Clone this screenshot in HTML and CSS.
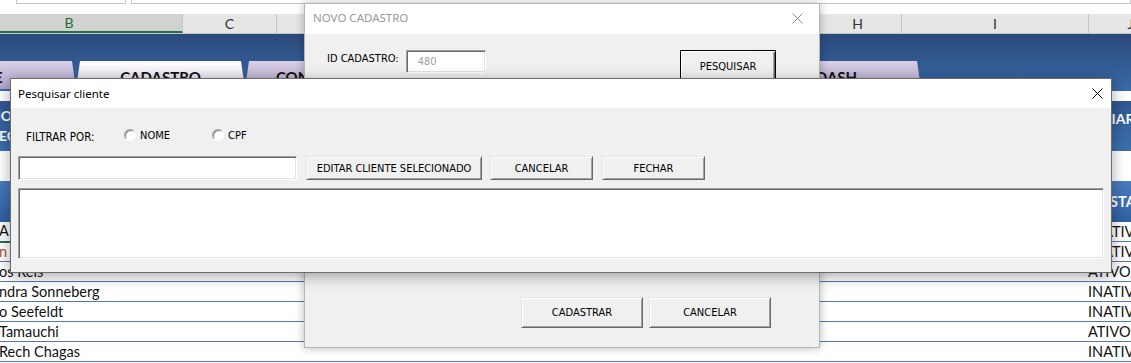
FILE: index.html
```html
<!DOCTYPE html>
<html lang="pt-BR">
<head>
  <meta charset="UTF-8">
  <title>Cadastro de clientes</title>
  <link rel="stylesheet" href="styles.css">
</head>
<body>
  <!-- Planilha ao fundo -->
  <div class="sheet">
    <div class="formula">
      <div class="namebox"></div>
      <div class="fxbox"></div>
    </div>

    <div class="colheads">
      <div class="col col-b selected">B</div>
      <div class="col col-c">C</div>
      <div class="col col-d">D</div>
      <div class="col col-e">E</div>
      <div class="col col-f">F</div>
      <div class="col col-g">G</div>
      <div class="col col-h">H</div>
      <div class="col col-i">I</div>
      <div class="col col-j">J</div>
    </div>

    <div class="banner">
      <div class="tabs">
        <div class="tab tab-first">HOME</div>
        <div class="tab active">CADASTRO</div>
        <div class="tab tab-con">CONSULTAR</div>
        <div class="tab">RELATÓRIO</div>
        <div class="tab">FINANCEIRO</div>
        <div class="tab">DASH</div>
      </div>
    </div>

    <div class="strip"></div>

    <div class="actions">
      <div class="act act-left">NOVO<br>RECADASTRO</div>
      <div class="act act-right">ENVIAR</div>
    </div>

    <div class="strip tall"></div>

    <div class="thead">
      <div class="cell-left"></div>
      <div class="cell-right">STATUS</div>
    </div>

    <div class="row first">
      <div class="cell-left">A</div>
      <div class="cell-right">INATIVO</div>
    </div>
    <div class="row">
      <div class="cell-left accent">n</div>
      <div class="cell-right">INATIVO</div>
    </div>
    <div class="row">
      <div class="cell-left">os Reis</div>
      <div class="cell-right">ATIVO</div>
    </div>
    <div class="row">
      <div class="cell-left">ndra Sonneberg</div>
      <div class="cell-right">INATIVO</div>
    </div>
    <div class="row">
      <div class="cell-left">o Seefeldt</div>
      <div class="cell-right">INATIVO</div>
    </div>
    <div class="row">
      <div class="cell-left">Tamauchi</div>
      <div class="cell-right">ATIVO</div>
    </div>
    <div class="row">
      <div class="cell-left">Rech Chagas</div>
      <div class="cell-right">INATIVO</div>
    </div>
  </div>

  <!-- Janela: Novo cadastro (inativa) -->
  <div class="win win-novo">
    <div class="titlebar">
      <span class="title muted">NOVO CADASTRO</span>
      <svg class="close" width="11" height="11" viewBox="0 0 11 11">
        <path d="M0.5 0.5L10.5 10.5M10.5 0.5L0.5 10.5" stroke="#8a8a8a" stroke-width="1"/>
      </svg>
    </div>
    <div class="novo-body">
      <div class="novo-row">
        <span class="lbl id-lbl">ID CADASTRO:</span>
        <div class="field id-field">480</div>
        <button class="btn btn-default pesquisar">PESQUISAR</button>
      </div>
      <div class="novo-footer">
        <button class="btn big">CADASTRAR</button>
        <button class="btn big">CANCELAR</button>
      </div>
    </div>
  </div>

  <!-- Janela: Pesquisar cliente (ativa) -->
  <div class="win win-pesq">
    <div class="titlebar">
      <span class="title">Pesquisar cliente</span>
      <svg class="close" width="11" height="11" viewBox="0 0 11 11">
        <path d="M0.5 0.5L10.5 10.5M10.5 0.5L0.5 10.5" stroke="#000" stroke-width="1"/>
      </svg>
    </div>
    <div class="pesq-body">
      <div class="filter">
        <span class="lbl filter-lbl">FILTRAR POR:</span>
        <label class="opt opt-nome"><span class="radio"></span>NOME</label>
        <label class="opt"><span class="radio"></span>CPF</label>
      </div>
      <div class="search">
        <div class="field search-field"></div>
        <button class="btn editar">EDITAR CLIENTE SELECIONADO</button>
        <button class="btn small">CANCELAR</button>
        <button class="btn small">FECHAR</button>
      </div>
      <div class="field list"></div>
    </div>
  </div>
</body>
</html>
```

FILE: styles.css
```css
html, body {
  margin: 0;
  padding: 0;
}

body {
  width: 1131px;
  height: 363px;
  overflow: hidden;
  position: relative;
  background: #fff;
  font-family: Lato, "Liberation Sans", sans-serif;
}

/* ---------- planilha ---------- */

.sheet {
  width: 1131px;
}

.formula {
  height: 14px;
  display: flex;
  gap: 5px;
  padding-left: 16px;
  box-sizing: border-box;
}

.namebox,
.fxbox {
  height: 3px;
  border: 1px solid #c6c6c6;
  border-top: none;
  background: #fff;
}

.namebox { width: 108px; }
.fxbox { flex: 1; }

.colheads {
  height: 19px;
  display: flex;
  background: #e6e6e6;
  border-bottom: 1px solid #c6c6c6;
}

.col {
  flex: none;
  display: flex;
  align-items: center;
  justify-content: center;
  font-size: 14px;
  color: #333;
  border-right: 1px solid #c6c6c6;
  box-sizing: border-box;
}

.col.selected {
  background: #d2d2d2;
  color: #1e6b41;
  border-bottom: 2px solid #217346;
}

.col-b { width: 183px; padding-right: 44px; }
.col-c { width: 94px; }
.col-d { width: 133px; }
.col-e { width: 135px; }
.col-f { width: 135px; }
.col-g { width: 134px; }
.col-h { width: 88px; }
.col-i { width: 187px; }
.col-j { width: 84px; }

.banner {
  height: 57px;
  box-sizing: border-box;
  padding-top: 27px;
  background: linear-gradient(to bottom, #2a4a79, #3a6aa9);
  overflow: hidden;
}

.tabs {
  display: flex;
  margin-left: -93px;
}

.tab {
  flex: none;
  width: 169px;
  height: 28px;
  box-sizing: border-box;
  padding-top: 7px;
  line-height: 18px;
  text-align: center;
  font-size: 15px;
  font-weight: bold;
  color: #111;
  background: linear-gradient(to bottom, #d9d0e6, #b3a4c9);
  clip-path: polygon(4px 0, calc(100% - 4px) 0, 100% 100%, 0 100%);
}

.tab.tab-first {
  padding-right: 24px;
}

.tab.tab-con {
  padding-right: 20px;
}

.tab.active {
  background: linear-gradient(to bottom, #ffffff, #ddd4ea);
}

.strip {
  height: 10px;
  background: #fff;
}

.strip.tall {
  height: 30px;
}

.actions {
  height: 50px;
  display: flex;
  justify-content: space-between;
}

.act {
  background: linear-gradient(to bottom, #2f5890, #3d6fae);
  color: #fff;
  font-weight: bold;
  font-size: 14px;
  line-height: 20px;
  box-sizing: border-box;
}

.act-left {
  width: 120px;
  margin-left: -10px;
  padding-top: 5px;
}

.act-right {
  width: 60px;
  padding-left: 12px;
  padding-top: 8px;
  white-space: nowrap;
}

.thead {
  height: 41px;
  display: flex;
  align-items: center;
  background: linear-gradient(to bottom, #4a7cc0, #30609f);
  color: #fff;
  font-weight: bold;
  font-size: 14.5px;
}

.thead .cell-right {
  padding-left: 24px;
}

.row {
  height: 20px;
  display: flex;
  align-items: center;
  box-sizing: border-box;
  border-bottom: 1px solid #5577b3;
  font-size: 14.5px;
  color: #111;
}

.row.first .cell-left {
  height: 20px;
  line-height: 19px;
  border-bottom: 2px solid #217346;
  margin-top: 1px;
}

.cell-left {
  width: 300px;
  margin-left: -1px;
  white-space: nowrap;
}

.cell-left.accent {
  color: #b0501c;
}

.cell-right {
  margin-left: auto;
  width: 45px;
  padding-left: 2px;
  white-space: nowrap;
  box-sizing: border-box;
}

/* ---------- janelas ---------- */

.win {
  position: absolute;
  box-sizing: border-box;
  background: #f0f0f0;
  display: flex;
  flex-direction: column;
  font-family: "DejaVu Sans Condensed", "DejaVu Sans", sans-serif;
  font-stretch: condensed;
  font-size: 11px;
  color: #000;
}

.win-novo {
  left: 304px;
  top: 3px;
  width: 516px;
  height: 345px;
  border: 1px solid #b5b5b5;
  box-shadow: 0 0 9px rgba(0, 0, 0, 0.28);
}

.win-pesq {
  left: 10px;
  top: 78px;
  width: 1102px;
  height: 195px;
  border: 1px solid #6c6c6c;
  box-shadow: 0 3px 14px rgba(0, 0, 0, 0.35);
}

.titlebar {
  flex: none;
  height: 30px;
  background: #fff;
  display: flex;
  align-items: center;
  justify-content: space-between;
  box-sizing: border-box;
}

.title {
  font-family: "Noto Sans", "Open Sans", sans-serif;
  font-stretch: normal;
  font-size: 11.5px;
  color: #000;
}

.title.muted {
  color: #999;
}

.win-novo .titlebar {
  padding: 0 16px 3px 8px;
}

.win-novo .close {
  margin-top: 2px;
}

.win-pesq .titlebar {
  height: 29px;
  padding: 0 8px 0 7px;
}

.close {
  display: block;
}

/* controles clássicos */

.field {
  background: #fff;
  box-sizing: border-box;
  border: 1px solid;
  border-color: #a0a0a0 #fff #fff #a0a0a0;
  box-shadow: inset 1px 1px 0 #696969, inset -1px -1px 0 #e3e3e3;
}

.btn {
  font: inherit;
  font-stretch: condensed;
  color: #000;
  background: #f0f0f0;
  box-sizing: border-box;
  border: 1px solid;
  border-color: #e3e3e3 #696969 #696969 #e3e3e3;
  box-shadow: inset 1px 1px 0 #fff, inset -1px -1px 0 #a0a0a0;
  padding: 0;
  margin: 0;
}

.btn-default {
  border-color: #000;
  box-shadow: inset 1px 1px 0 #fff, inset -1px -1px 0 #696969, inset -2px -2px 0 #a0a0a0;
}

.lbl {
  white-space: nowrap;
}

/* novo cadastro */

.novo-body {
  flex: 1;
  display: flex;
  flex-direction: column;
  padding: 16px 43px 19px 22px;
}

.novo-row {
  display: flex;
  align-items: flex-start;
}

.id-lbl {
  padding-top: 2px;
  margin-right: 7px;
}

.id-field {
  width: 80px;
  height: 23px;
  line-height: 21px;
  padding-left: 11px;
  color: #a0a0a0;
}

.pesquisar {
  margin-left: auto;
  width: 96px;
  height: 32px;
}

.novo-footer {
  margin-top: auto;
  display: flex;
  justify-content: flex-end;
  gap: 6px;
  padding-right: 5px;
}

.btn.big {
  width: 122px;
  height: 31px;
}

/* pesquisar cliente */

.pesq-body {
  flex: 1;
  padding: 0 7px;
}

.filter {
  margin-top: 20px;
  height: 14px;
  display: flex;
  align-items: center;
  padding-left: 8px;
}

.filter-lbl {
  padding-top: 3px;
  width: 98px;
  font-size: 11.5px;
}

.opt {
  display: flex;
  align-items: center;
  gap: 4px;
}

.opt-nome {
  width: 88px;
}

.radio {
  width: 12px;
  height: 12px;
  box-sizing: border-box;
  border-radius: 50%;
  border: 1px solid;
  border-color: #a0a0a0 #fff #fff #a0a0a0;
  background: #fff;
  box-shadow: inset 1px 1px 0 #8a8a8a;
}

.search {
  margin-top: 14px;
  display: flex;
  height: 24px;
}

.search-field {
  width: 279px;
  height: 24px;
  margin-right: 9px;
}

.search .btn {
  height: 24px;
}

.editar {
  width: 176px;
  margin-right: 8px;
}

.btn.small {
  width: 103px;
  margin-right: 9px;
}

.list {
  margin-top: 8px;
  height: 71px;
}
```
